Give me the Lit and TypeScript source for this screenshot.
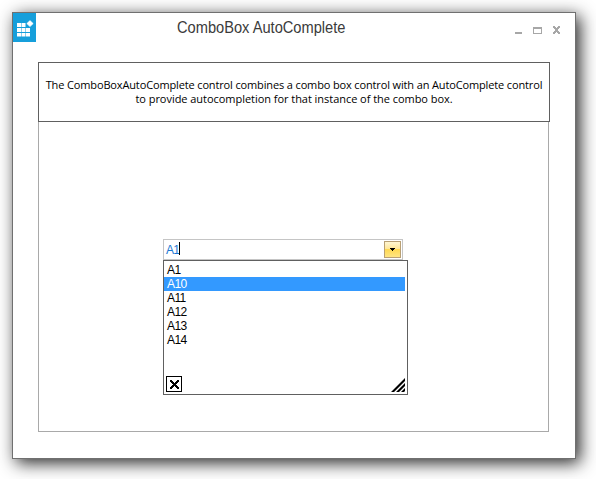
import { LitElement, html, css } from "lit";
import { customElement, state } from "lit/decorators.js";
import { classMap } from "lit/directives/class-map.js";

@customElement("app-root")
export class AppRoot extends LitElement {
  static styles = css`
    :host {
      display: block;
      box-sizing: border-box;
      width: 596px;
      height: 479px;
      padding: 12px;
      overflow: hidden;
      background: #fff;
      font-family: "Liberation Sans", Arial, sans-serif;
    }
    * { box-sizing: border-box; }
    svg { display: block; }
    .window {
      width: 564px;
      height: 447px;
      border: 1px solid #707070;
      background: #fff;
      box-shadow: 4px 4px 16px 0 rgba(0, 0, 0, 0.85);
    }
    .titlebar {
      display: grid;
      grid-template-columns: 23px 1fr 60px;
      height: 49px;
    }
    .logo { width: 23px; height: 29px; background: #169fdb; }
    .title {
      padding: 6px 0 0 141px;
      font-size: 16px;
      line-height: 18px;
      white-space: nowrap;
      color: #3b3b3b;
    }
    .title span {
      display: inline-block;
      transform: scaleX(0.915);
      transform-origin: left;
    }
    .controls { padding-top: 12px; }
    .content { width: 512px; margin-left: 25px; }
    .info {
      height: 60px;
      padding-top: 15px;
      border: 1px solid #606060;
      font: 11px/14px "Open Sans", "Noto Sans", sans-serif;
      text-align: center;
      white-space: nowrap;
      color: #000;
    }
    .info div { height: 14px; letter-spacing: -0.04px; }
    .info .lead { letter-spacing: -0.138px; }
    .stage {
      width: 511px;
      height: 310px;
      padding: 117px 0 0 124px;
      border: 1px solid #a9a9a9;
      border-top: 0;
    }
    .combo {
      display: flex;
      justify-content: space-between;
      width: 240px;
      height: 21px;
      padding: 1px 1px 0 2px;
      border: 1px solid #c5c5c5;
      font-size: 12px;
      line-height: 18px;
      color: #1976d2;
    }
    .entry { display: flex; align-items: flex-start; }
    .entry span { width: 13px; letter-spacing: -0.8px; }
    .caret { width: 1px; height: 13px; margin-top: 1px; background: #000; }
    .arrow {
      width: 17px;
      height: 17px;
      border: 1px solid #b9a074;
      background: linear-gradient(#fff6d2 0, #ffe79a 45%, #ffd84e 46%, #ffe583 100%);
    }
    .dropdown {
      display: flex;
      flex-direction: column;
      justify-content: space-between;
      width: 245px;
      height: 135px;
      padding: 2px 2px 1px 0;
      border: 1px solid #606060;
      font-size: 12px;
      line-height: 14px;
      color: #000;
    }
    .item { height: 14px; padding-left: 3px; letter-spacing: -0.6px; }
    .item.selected { background: #3399ff; color: #fff; }
    .footer {
      display: flex;
      justify-content: space-between;
      align-items: flex-end;
      padding: 0 0 1px 2px;
    }
  `;

  @state() private query = "A1";
  @state() private selected = "A10";
  private items = ["A1", "A10", "A11", "A12", "A13", "A14"];

  render() {
    return html`
      <div class="window">
        <div class="titlebar">
          <div class="logo">
            <svg width="23" height="29" fill="#fff">
              <path d="M4 10h4v4h-4zM8.5 10h4v4h-4zM4 15h4v4h-4zM8.5 15h4v4h-4zM13 15h4v4h-4zM4 20h4v3.5h-4zM8.5 20h4v3.5h-4zM13 20h4v3.5h-4z"/>
              <path d="M17 7.6l3.2 3-3.2 3-3.2-3z" stroke="#fff" stroke-width=".6"/>
            </svg>
          </div>
          <div class="title"><span>ComboBox AutoComplete</span></div>
          <div class="controls">
            <svg width="60" height="12" fill="#a7a7a7" shape-rendering="crispEdges">
              <path d="M0 7h7v2h-7z"/>
              <path fill-rule="evenodd" d="M18 2h9v7h-9zM19 4v4h7v-4z"/>
              <path d="M38 1h2v1h1v1h1v-1h1v-1h2v2h-1v1h-1v2h1v1h1v2h-2v-1h-1v-1h-1v1h-1v1h-2v-2h1v-1h1v-2h-1v-1h-1z"/>
            </svg>
          </div>
        </div>
        <div class="content">
          <div class="info">
            <div class="lead">The ComboBoxAutoComplete control combines a combo box control with an AutoComplete control</div>
            <div>to provide autocompletion for that instance of the combo box.</div>
          </div>
          <div class="stage">
            <div class="combo">
              <div class="entry"><span>${this.query}</span><i class="caret"></i></div>
              <div class="arrow">
                <svg width="15" height="15" shape-rendering="crispEdges">
                  <path d="M5 6h5v1h-1v1h-1v1h-1v-1h-1v-1h-1z"/>
                </svg>
              </div>
            </div>
            <div class="dropdown">
              <div>
                ${this.items.map(
                  (item) => html`<div
                    class=${classMap({ item: true, selected: item === this.selected })}
                    @click=${() => (this.selected = item)}
                  >${item}</div>`
                )}
              </div>
              <div class="footer">
                <svg width="16" height="16" shape-rendering="crispEdges">
                  <rect x=".5" y=".5" width="15" height="15" fill="#fff" stroke="#000"/>
                  <path d="M4 4h2v1h1v1h1v1h1v-1h1v-1h1v-1h2v2h-1v1h-1v1h-1v1h1v1h1v1h1v2h-2v-1h-1v-1h-1v-1h-1v1h-1v1h-1v1h-2v-2h1v-1h1v-1h1v-1h-1v-1h-1v-1h-1z"/>
                </svg>
                <svg width="14" height="14">
                  <path d="M0 14L14 0V3L3 14zM5 14L14 5V8L8 14zM10 14L14 10V13L13 14z"/>
                </svg>
              </div>
            </div>
          </div>
        </div>
      </div>
    `;
  }
}
